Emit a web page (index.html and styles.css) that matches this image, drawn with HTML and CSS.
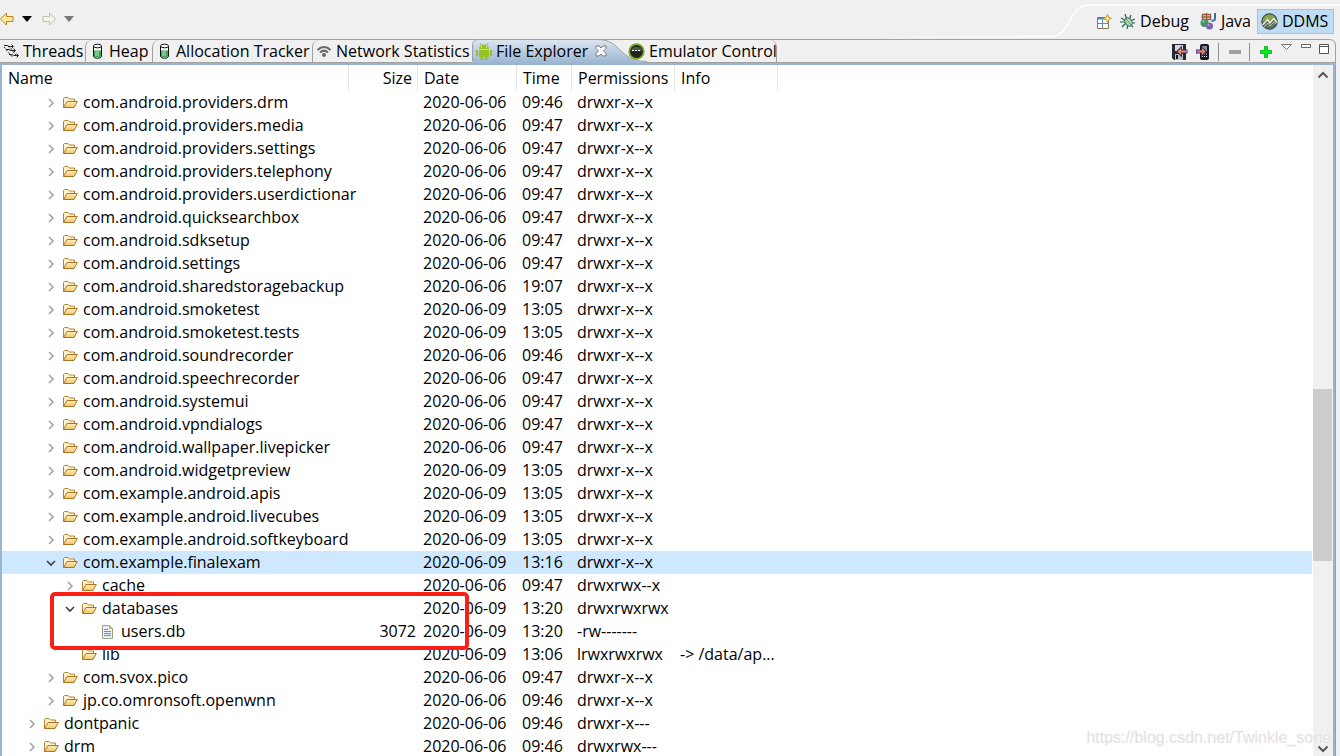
FILE: index.html
```html
<!DOCTYPE html>
<html lang="en">
<head>
<meta charset="utf-8">
<title>DDMS - File Explorer</title>
<link rel="stylesheet" href="styles.css">
</head>
<body>
<svg class="defs" aria-hidden="true">
  <defs>
    <linearGradient id="gold" x1="0" y1="0" x2="0" y2="1"><stop offset="0" stop-color="#fff0bd"/><stop offset="1" stop-color="#f0c469"/></linearGradient>
    <linearGradient id="blue" x1="0" y1="0" x2="0" y2="1"><stop offset="0" stop-color="#dce6f0"/><stop offset="1" stop-color="#99b4d1"/></linearGradient>
    <linearGradient id="fade" gradientUnits="userSpaceOnUse" x1="0" y1="0" x2="190" y2="0"><stop offset="0" stop-color="#fff" stop-opacity="0"/><stop offset="1" stop-color="#fff"/></linearGradient>
    <symbol id="folder" viewBox="0 0 16 16"><path d="M1.500 12.500V3.500L2.500 2.500h3.500l1.500 1.500h5v3" fill="#fff3cf" stroke="#b9822f"/><path d="M1.500 12.500L5 6.500h10.300L12 12.500z" fill="url(#gold)" stroke="#ab7425" stroke-linejoin="round"/></symbol>
    <symbol id="file" viewBox="0 0 16 16"><path d="M2.500 1.500h7l3 3v10h-10z" fill="#e9f1fb" stroke="#9a9c86"/><path d="M9.500 1.500v3h3" fill="#e8d48b" stroke="#b8a468"/><path d="M4 5.500h4M4 7.500h7M4 9.500h7M4 11.500h7" stroke="#6f8fc4"/></symbol>
    <symbol id="closed" viewBox="0 0 12 12"><path d="M4 2l4 4-4 4" fill="none" stroke="#a0a0a0" stroke-width="1.500"/></symbol>
    <symbol id="open" viewBox="0 0 12 12"><path d="M2 4l4 4 4-4" fill="none" stroke="#404040" stroke-width="1.700"/></symbol>
    <symbol id="heap" viewBox="0 0 16 16"><path d="M4.500 3v10c0 3 8 3 8 0V3" fill="#f7f7f7" stroke="#111"/><path d="M5 7.500h7V13c0 2-7 2-7 0z" fill="#42a35b"/><path d="M6 8h4v5H6z" fill="#76c987"/><ellipse cx="8.500" cy="3" rx="4" ry="1.800" fill="#fff" stroke="#111"/></symbol>
  </defs>
</svg>

<div class="workbench">
  <header class="topbar">
    <nav class="history" aria-label="History">
      <button class="tool back" aria-label="Back"><svg width="14" height="14" viewBox="0 0 14 14"><path d="M0.500 7L6.500 1v3.500H13v5H6.500V13z" fill="#ffe79b" stroke="#bf8419"/></svg></button>
      <button class="tool drop" aria-label="Back history"><svg width="10" height="6" viewBox="0 0 10 6"><path d="M0 0h10L5 6z" fill="#000"/></svg></button>
      <button class="tool forward" aria-label="Forward"><svg width="14" height="14" viewBox="0 0 14 14"><path d="M13.500 7L7.500 1v3.500H1v5h6.500V13z" fill="#f4f4ee" stroke="#bdbdb2"/></svg></button>
      <button class="tool drop" aria-label="Forward history"><svg width="10" height="6" viewBox="0 0 10 6"><path d="M0 0h10L5 6z" fill="#777"/></svg></button>
    </nav>
    <div class="perspectives">
      <svg class="swoop" width="480" height="39" viewBox="0 0 480 39" aria-hidden="true"><path d="M0 36.500H190C212 36.500 207 5 230 5H480" fill="none" stroke="url(#fade)" stroke-width="1.500"/></svg>
      <button class="tool newp" aria-label="Open Perspective"><svg width="16" height="16" viewBox="0 0 16 16"><path d="M1.500 3.500h11v11h-11z" fill="#fff" stroke="#807b58"/><path d="M2 3.500h8v2H2z" fill="#4e85c1"/><path d="M1.500 9.500h11M6.500 6v8" stroke="#698ca8"/><path d="M11.500 0.500l1.200 2.800 2.800 1.200-2.800 1.200-1.200 2.800-1.200-2.800-2.800-1.200 2.800-1.200z" fill="#fff0a8" stroke="#c49522"/></svg></button>
      <button class="persp debug"><svg width="16" height="16" viewBox="0 0 16 16"><path d="M1 4l5 3M5 0l2 6M11 1L9 6M15 5l-5 2M0 8h5M2 13l4-4M7 15l1-5M13 13l-4-4M15 9h-5" stroke="#225b50" stroke-width="1.200"/><ellipse cx="8.500" cy="8" rx="3.200" ry="4.500" transform="rotate(-35 8.500 8)" fill="#b6dca4" stroke="#2e7168"/><path d="M6 5l5 6" stroke="#5d9870"/></svg><span>Debug</span></button>
      <button class="persp java"><svg width="17" height="17" viewBox="0 0 17 17"><path d="M2.500 1.500h8v5h-8zM6.500 0v7M1.500 4h10" fill="#f1d7bb" stroke="#965c3f" stroke-width="1.300"/><circle cx="4.500" cy="10" r="4" fill="#3f9464"/><circle cx="3.500" cy="8.500" r="1.200" fill="#87c79a"/><circle cx="9.500" cy="13" r="3.500" fill="#7765aa"/><circle cx="8.500" cy="12" r="1" fill="#b9afd7"/><path d="M15 0v5.500c0 2-1.500 2.500-3.500 2" fill="none" stroke="#3870a5" stroke-width="2"/></svg><span>Java</span></button>
      <button class="persp ddms" aria-pressed="true"><svg width="17" height="17" viewBox="0 0 17 17"><circle cx="8.500" cy="8.500" r="7.500" fill="#667269" stroke="#415144" stroke-width="1.500"/><path d="M1.500 9A7 7 0 0 1 15.500 8L12 5 9 9 6.500 6z" fill="#86a74d"/><path d="M1.500 12L6.500 6.500 9 10l3.500-4.500 3.500 4" fill="none" stroke="#f0f4df" stroke-width="1.300"/><path d="M3 14l4-4 2 3 4-4 2 2" fill="none" stroke="#b9c5b5"/></svg><span>DDMS</span></button>
    </div>
  </header>

  <main class="view">
    <div class="tabbar">
      <div class="tabs" role="tablist">
        <button class="tab threads" role="tab"><svg width="16" height="16" viewBox="0 0 16 16"><g fill="none" stroke="#222"><path d="M1 2.500h3.500l1.500 1H10M8.500 1.500l2 2-2 2"/><path d="M3 6.500h3l1.500 1H12M10.500 5.500l2 2-2 2"/><path d="M6 11.500h3l1.500 1H15M13.500 10.500l2 2-2 2"/><path d="M1 4l9 11M5 3l8 9" stroke-dasharray="2 1.500"/></g></svg><span>Threads</span></button>
        <button class="tab heap" role="tab"><svg width="16" height="16"><use href="#heap"/></svg><span>Heap</span></button>
        <button class="tab alloc" role="tab"><svg width="16" height="16"><use href="#heap"/></svg><span>Allocation Tracker</span></button>
        <button class="tab network" role="tab"><svg width="16" height="16" viewBox="0 0 16 16"><path d="M1.500 7c4-4 9-4 13 0M4 9.500c2.500-2.500 5.500-2.500 8 0" fill="none" stroke="#696969" stroke-width="2"/><circle cx="8" cy="12" r="2" fill="#696969"/></svg><span>Network Statistics</span></button>
        <div class="tab explorer">
          <svg class="shape" width="180" height="25" viewBox="0 0 180 25" aria-hidden="true"><path d="M0.500 25V6C1 2 3 0.500 7 0.500H126C149 0.500 147 22.500 175 23.500V25z" fill="url(#blue)"/><path d="M0.500 22V6C1 2 3 0.500 7 0.500H126C149 0.500 147 22.500 175 22.500" fill="none" stroke="#999fa6"/></svg>
          <button class="label" role="tab" aria-selected="true"><svg width="16" height="17" viewBox="0 0 16 17"><g fill="#98bf25"><path d="M3 6c0-6 10-6 10 0z"/><path d="M3 7h10v7H3zM0 7h2v6H0zM14 7h2v6h-2zM4.500 13h2.500v4H4.500zM9 13h2.500v4H9z"/></g><path d="M4 0l1.500 2.500M12 0l-1.500 2.500" stroke="#98bf25"/><path d="M5 4h1M10 4h1" stroke="#fff"/></svg><span>File Explorer</span></button>
          <button class="tool close" aria-label="Close"><svg width="12" height="12" viewBox="0 0 12 12"><path d="M1 1h3l2 2 2-2h3v2.500L8.500 6 11 8.500V11H8L6 9l-2 2H1V8.500L3.500 6 1 3.500z" fill="#fff" stroke="#777"/></svg></button>
        </div>
        <button class="tab emulator" role="tab"><svg width="17" height="17" viewBox="0 0 17 17"><circle cx="8.500" cy="8.500" r="7.300" fill="#1f2420" stroke="#83a52d" stroke-width="1.800"/><path d="M3.500 6c2-3 8-3 10 0v2h-10z" fill="#4d534f"/><path d="M4 7.500h2M7 7.500h2M10 7.500h2" stroke="#fff"/></svg><span>Emulator Control</span></button>
      </div>
      <div class="actions">
        <button class="tool" aria-label="Pull a file from the device"><svg width="17" height="16" viewBox="0 0 17 16"><path d="M1 0h14v16H3l-2-2z" fill="#26292d"/><path d="M4 1h8v6H4z" fill="#d8dae0"/><path d="M4 10h8v6H4z" fill="#b8bac2"/><path d="M5 11h2v4H5z" fill="#16181c"/><path d="M5 7.500L11 1.500v4h5.500v4H11v4z" fill="#1727df"/><path d="M6.500 7.500L10 4v2.500h6v2h-6V11z" fill="#ff8b17"/></svg></button>
        <button class="tool" aria-label="Push a file onto the device"><svg width="16" height="16" viewBox="0 0 16 16"><rect x="5" y="0" width="9" height="16" rx="2" fill="#15161b"/><path d="M7 2h5v6H7z" fill="#8390a0"/><path d="M7 10h1M9 10h1M11 10h1M7 12.500h1M9 12.500h1M11 12.500h1" stroke="#fff"/><path d="M12 7.500L6 1.500v4H1v4h5v4z" fill="#1727df"/><path d="M10.500 7.500L7 4v2.500H1.500v2H7V11z" fill="#ff8b17"/></svg></button>
        <span class="sep"></span>
        <button class="tool minus" aria-label="Delete the selection"><svg width="12" height="4"><path d="M0 0h12v4H0z" fill="#a0a0a0"/></svg></button>
        <span class="sep"></span>
        <button class="tool plus" aria-label="New Folder"><svg width="12" height="12" viewBox="0 0 12 12"><path d="M4.500 0.500h3v4h4v3h-4v4h-3v-4h-4v-3h4z" fill="#00ed20" stroke="#14b928"/></svg></button>
        <button class="tool high" aria-label="View Menu"><svg width="11" height="6" viewBox="0 0 11 6"><path d="M0.500 0.500h10l-5 5z" fill="#fff" stroke="#777"/></svg></button>
        <button class="tool high" aria-label="Minimize"><svg width="10" height="4" viewBox="0 0 10 4"><path d="M0.500 0.500h9v3h-9z" fill="#fff" stroke="#666"/></svg></button>
        <button class="tool max" aria-label="Maximize"><svg width="10" height="10" viewBox="0 0 10 10"><path d="M0.500 0.500h9v9h-9zM0 2.500h10" fill="#fff" stroke="#555"/></svg></button>
      </div>
    </div>

    <div class="content">
      <div class="scroller">
        <table class="tree">
          <colgroup><col class="c-name"><col class="c-size"><col class="c-date"><col class="c-time"><col class="c-perm"><col class="c-info"><col></colgroup>
          <thead><tr><th>Name</th><th class="size">Size</th><th>Date</th><th>Time</th><th>Permissions</th><th>Info</th><th class="rest"></th></tr></thead>
          <tbody>
            <tr><td><div class="node l1"><button class="twist" aria-label="Expand"><svg><use href="#closed"/></svg></button><svg class="ico"><use href="#folder"/></svg><span>com.android.providers.drm</span></div></td><td></td><td>2020-06-06</td><td>09:46</td><td>drwxr-x--x</td><td></td><td></td></tr>
            <tr><td><div class="node l1"><button class="twist" aria-label="Expand"><svg><use href="#closed"/></svg></button><svg class="ico"><use href="#folder"/></svg><span>com.android.providers.media</span></div></td><td></td><td>2020-06-06</td><td>09:47</td><td>drwxr-x--x</td><td></td><td></td></tr>
            <tr><td><div class="node l1"><button class="twist" aria-label="Expand"><svg><use href="#closed"/></svg></button><svg class="ico"><use href="#folder"/></svg><span>com.android.providers.settings</span></div></td><td></td><td>2020-06-06</td><td>09:47</td><td>drwxr-x--x</td><td></td><td></td></tr>
            <tr><td><div class="node l1"><button class="twist" aria-label="Expand"><svg><use href="#closed"/></svg></button><svg class="ico"><use href="#folder"/></svg><span>com.android.providers.telephony</span></div></td><td></td><td>2020-06-06</td><td>09:47</td><td>drwxr-x--x</td><td></td><td></td></tr>
            <tr><td><div class="node l1"><button class="twist" aria-label="Expand"><svg><use href="#closed"/></svg></button><svg class="ico"><use href="#folder"/></svg><span>com.android.providers.userdictionar</span></div></td><td></td><td>2020-06-06</td><td>09:47</td><td>drwxr-x--x</td><td></td><td></td></tr>
            <tr><td><div class="node l1"><button class="twist" aria-label="Expand"><svg><use href="#closed"/></svg></button><svg class="ico"><use href="#folder"/></svg><span>com.android.quicksearchbox</span></div></td><td></td><td>2020-06-06</td><td>09:47</td><td>drwxr-x--x</td><td></td><td></td></tr>
            <tr><td><div class="node l1"><button class="twist" aria-label="Expand"><svg><use href="#closed"/></svg></button><svg class="ico"><use href="#folder"/></svg><span>com.android.sdksetup</span></div></td><td></td><td>2020-06-06</td><td>09:47</td><td>drwxr-x--x</td><td></td><td></td></tr>
            <tr><td><div class="node l1"><button class="twist" aria-label="Expand"><svg><use href="#closed"/></svg></button><svg class="ico"><use href="#folder"/></svg><span>com.android.settings</span></div></td><td></td><td>2020-06-06</td><td>09:47</td><td>drwxr-x--x</td><td></td><td></td></tr>
            <tr><td><div class="node l1"><button class="twist" aria-label="Expand"><svg><use href="#closed"/></svg></button><svg class="ico"><use href="#folder"/></svg><span>com.android.sharedstoragebackup</span></div></td><td></td><td>2020-06-06</td><td>19:07</td><td>drwxr-x--x</td><td></td><td></td></tr>
            <tr><td><div class="node l1"><button class="twist" aria-label="Expand"><svg><use href="#closed"/></svg></button><svg class="ico"><use href="#folder"/></svg><span>com.android.smoketest</span></div></td><td></td><td>2020-06-09</td><td>13:05</td><td>drwxr-x--x</td><td></td><td></td></tr>
            <tr><td><div class="node l1"><button class="twist" aria-label="Expand"><svg><use href="#closed"/></svg></button><svg class="ico"><use href="#folder"/></svg><span>com.android.smoketest.tests</span></div></td><td></td><td>2020-06-09</td><td>13:05</td><td>drwxr-x--x</td><td></td><td></td></tr>
            <tr><td><div class="node l1"><button class="twist" aria-label="Expand"><svg><use href="#closed"/></svg></button><svg class="ico"><use href="#folder"/></svg><span>com.android.soundrecorder</span></div></td><td></td><td>2020-06-06</td><td>09:46</td><td>drwxr-x--x</td><td></td><td></td></tr>
            <tr><td><div class="node l1"><button class="twist" aria-label="Expand"><svg><use href="#closed"/></svg></button><svg class="ico"><use href="#folder"/></svg><span>com.android.speechrecorder</span></div></td><td></td><td>2020-06-06</td><td>09:47</td><td>drwxr-x--x</td><td></td><td></td></tr>
            <tr><td><div class="node l1"><button class="twist" aria-label="Expand"><svg><use href="#closed"/></svg></button><svg class="ico"><use href="#folder"/></svg><span>com.android.systemui</span></div></td><td></td><td>2020-06-06</td><td>09:47</td><td>drwxr-x--x</td><td></td><td></td></tr>
            <tr><td><div class="node l1"><button class="twist" aria-label="Expand"><svg><use href="#closed"/></svg></button><svg class="ico"><use href="#folder"/></svg><span>com.android.vpndialogs</span></div></td><td></td><td>2020-06-06</td><td>09:47</td><td>drwxr-x--x</td><td></td><td></td></tr>
            <tr><td><div class="node l1"><button class="twist" aria-label="Expand"><svg><use href="#closed"/></svg></button><svg class="ico"><use href="#folder"/></svg><span>com.android.wallpaper.livepicker</span></div></td><td></td><td>2020-06-06</td><td>09:47</td><td>drwxr-x--x</td><td></td><td></td></tr>
            <tr><td><div class="node l1"><button class="twist" aria-label="Expand"><svg><use href="#closed"/></svg></button><svg class="ico"><use href="#folder"/></svg><span>com.android.widgetpreview</span></div></td><td></td><td>2020-06-09</td><td>13:05</td><td>drwxr-x--x</td><td></td><td></td></tr>
            <tr><td><div class="node l1"><button class="twist" aria-label="Expand"><svg><use href="#closed"/></svg></button><svg class="ico"><use href="#folder"/></svg><span>com.example.android.apis</span></div></td><td></td><td>2020-06-09</td><td>13:05</td><td>drwxr-x--x</td><td></td><td></td></tr>
            <tr><td><div class="node l1"><button class="twist" aria-label="Expand"><svg><use href="#closed"/></svg></button><svg class="ico"><use href="#folder"/></svg><span>com.example.android.livecubes</span></div></td><td></td><td>2020-06-09</td><td>13:05</td><td>drwxr-x--x</td><td></td><td></td></tr>
            <tr><td><div class="node l1"><button class="twist" aria-label="Expand"><svg><use href="#closed"/></svg></button><svg class="ico"><use href="#folder"/></svg><span>com.example.android.softkeyboard</span></div></td><td></td><td>2020-06-09</td><td>13:05</td><td>drwxr-x--x</td><td></td><td></td></tr>
            <tr class="selected"><td><div class="node l1"><button class="twist" aria-label="Collapse"><svg><use href="#open"/></svg></button><svg class="ico"><use href="#folder"/></svg><span>com.example.finalexam</span></div></td><td></td><td>2020-06-09</td><td>13:16</td><td>drwxr-x--x</td><td></td><td></td></tr>
            <tr><td><div class="node l2"><button class="twist" aria-label="Expand"><svg><use href="#closed"/></svg></button><svg class="ico"><use href="#folder"/></svg><span>cache</span></div></td><td></td><td>2020-06-06</td><td>09:47</td><td>drwxrwx--x</td><td></td><td></td></tr>
            <tr><td><div class="node l2"><button class="twist" aria-label="Collapse"><svg><use href="#open"/></svg></button><svg class="ico"><use href="#folder"/></svg><span>databases</span></div></td><td></td><td>2020-06-09</td><td>13:20</td><td>drwxrwxrwx</td><td></td><td></td></tr>
            <tr><td><div class="node l3"><span class="twist"></span><svg class="ico"><use href="#file"/></svg><span>users.db</span></div></td><td class="size">3072</td><td>2020-06-09</td><td>13:20</td><td>-rw-------</td><td></td><td></td></tr>
            <tr><td><div class="node l2"><span class="twist"></span><svg class="ico"><use href="#folder"/></svg><span>lib</span></div></td><td></td><td>2020-06-09</td><td>13:06</td><td>lrwxrwxrwx</td><td>-&gt; /data/ap...</td><td></td></tr>
            <tr><td><div class="node l1"><button class="twist" aria-label="Expand"><svg><use href="#closed"/></svg></button><svg class="ico"><use href="#folder"/></svg><span>com.svox.pico</span></div></td><td></td><td>2020-06-06</td><td>09:47</td><td>drwxr-x--x</td><td></td><td></td></tr>
            <tr><td><div class="node l1"><button class="twist" aria-label="Expand"><svg><use href="#closed"/></svg></button><svg class="ico"><use href="#folder"/></svg><span>jp.co.omronsoft.openwnn</span></div></td><td></td><td>2020-06-06</td><td>09:46</td><td>drwxr-x--x</td><td></td><td></td></tr>
            <tr><td><div class="node l0"><button class="twist" aria-label="Expand"><svg><use href="#closed"/></svg></button><svg class="ico"><use href="#folder"/></svg><span>dontpanic</span></div></td><td></td><td>2020-06-06</td><td>09:46</td><td>drwxr-x---</td><td></td><td></td></tr>
            <tr><td><div class="node l0"><button class="twist" aria-label="Expand"><svg><use href="#closed"/></svg></button><svg class="ico"><use href="#folder"/></svg><span>drm</span></div></td><td></td><td>2020-06-06</td><td>09:46</td><td>drwxrwx---</td><td></td><td></td></tr>
          </tbody>
        </table>
        <div class="callout"></div>
      </div>
      <div class="scrollbar">
        <button class="tool arrow" aria-label="Scroll up"><svg width="12" height="12" viewBox="0 0 12 12"><path d="M1.500 8.500L6 4l4.500 4.500" fill="none" stroke="#555" stroke-width="2"/></svg></button>
        <div class="track"><div class="thumb"></div></div>
        <button class="tool arrow down" aria-label="Scroll down"><svg width="12" height="12" viewBox="0 0 12 12"><path d="M1.500 3.500L6 8l4.500-4.500" fill="none" stroke="#555" stroke-width="2"/></svg></button>
      </div>
    </div>
  </main>
  <div class="watermark">https://blog.csdn.net/Twinkle_sone</div>
</div>
</body>
</html>
```
FILE: styles.css
```css
* { box-sizing: border-box; }

body {
  margin: 0;
  overflow: hidden;
  background: #f0f0f0;
  color: #000;
  font: 16px/23px "Open Sans", "Noto Sans", sans-serif;
}

button {
  margin: 0;
  padding: 0;
  border: 0;
  background: none;
  color: inherit;
  font: inherit;
  white-space: nowrap;
}

svg { display: block; flex: none; }
.defs { position: absolute; width: 0; height: 0; }

.workbench {
  position: relative;
  display: flex;
  flex-direction: column;
  height: 100vh;
  overflow: hidden;
}

.tool { display: flex; align-items: center; justify-content: center; flex: none; }

/* Top bar */
.topbar { display: flex; justify-content: space-between; height: 39px; flex: none; }
.history { display: flex; align-items: center; height: 38px; gap: 8px; }
.forward { margin-left: 2px; }

.perspectives { position: relative; display: flex; align-items: center; padding: 4px 6px 0 0; }
.swoop { position: absolute; right: 0; top: 0; }
.newp { margin-right: 3px; }
.persp { position: relative; display: flex; align-items: center; gap: 4px; height: 25px; padding: 0 6px 0 5px; }
.ddms { width: 77px; padding: 0 3px; border: 1px solid #90c8f6; background: #bfdcf4; }

/* Tabs */
.view { display: flex; flex-direction: column; flex: 1; min-height: 0; margin-right: 4px; border-right: 1px solid #a0a0a0; border-top-right-radius: 6px; }
.tabbar { display: flex; justify-content: space-between; height: 26px; flex: none; border-top: 1px solid #a0a0a0; border-bottom: 2px solid #99b4d1; border-top-right-radius: 6px; box-shadow: inset 0 -1px #a0a0a0; }
.tabs { display: flex; }
.tab { display: flex; align-items: center; gap: 4px; height: 22px; padding-left: 3px; border-left: 1px solid #a0a0a0; border-top-left-radius: 7px; }
.threads { width: 85px; padding-left: 3px; border-left: 0; }
.heap { width: 67px; }
.alloc { width: 160px; }
.network { width: 160px; }
.explorer { position: relative; width: 152px; padding-left: 4px; border-left: 0; }
.shape { position: absolute; left: 0; top: -1px; }
.label { position: relative; display: flex; align-items: center; gap: 4px; }
.close { position: relative; margin-left: 3px; }
.emulator { position: relative; width: 153px; padding-left: 4px; border-left: 0; border-right: 1px solid #a0a0a0; border-radius: 0 7px 0 0; }

.actions { display: flex; align-items: center; height: 23px; gap: 7px; padding-right: 6px; }
.sep { width: 1px; height: 18px; background: #909090; }
.minus, .plus { margin: 0 1px 0 3px; }
.high { align-self: flex-start; margin: 4px 1px 0; }
.max { align-self: flex-start; margin-top: 4px; }

/* File tree */
.content { display: flex; flex: 1; min-height: 0; border-left: 2px solid #99b4d1; border-right: 2px solid #99b4d1; background: #fff; }
.scroller { position: relative; flex: 1; min-width: 0; margin-right: 1px; overflow: hidden; }
.tree { width: 100%; table-layout: fixed; border-collapse: separate; border-spacing: 0; }
.c-name { width: 347px; }
.c-size { width: 69px; }
.c-date { width: 99px; }
.c-time { width: 55px; }
.c-perm { width: 103px; }
.c-info { width: 103px; }

th { height: 26px; padding: 0 5px 0 6px; border-right: 1px solid #e5e5e5; font-weight: 400; text-align: left; }
th.rest { border-right: 0; }
td { height: 23px; padding: 0 0 0 5px; white-space: nowrap; }
td:first-child { padding: 0; }
th.size, td.size { text-align: right; }
td.size { padding-right: 2px; }
.selected { background: #cde8ff; }

.node { display: flex; align-items: center; height: 23px; }
.l0 { padding-left: 24px; }
.l1 { padding-left: 43px; }
.l2 { padding-left: 62px; }
.l3 { padding-left: 81px; }
.twist { width: 12px; height: 12px; margin-right: 5px; flex: none; }
.twist svg { width: 12px; height: 12px; }
.ico { width: 16px; height: 16px; margin-right: 5px; }

.callout { position: absolute; left: 48px; top: 527px; width: 419px; height: 58px; border: 4px solid #fb2016; border-radius: 5px; }

/* Scrollbar */
.scrollbar { display: flex; flex-direction: column; width: 20px; flex: none; background: #f0f0f0; }
.arrow { width: 20px; height: 20px; }
.down { height: 14px; }
.track { flex: 1; padding-top: 304px; }
.thumb { width: 19px; height: 172px; background: #cdcdcd; }

.watermark { position: absolute; right: 9px; bottom: 7px; color: #e2e2e2; font: 16px/23px "Liberation Sans", Arial, sans-serif; text-shadow: -1px -1px #fafafa; pointer-events: none; }
```
